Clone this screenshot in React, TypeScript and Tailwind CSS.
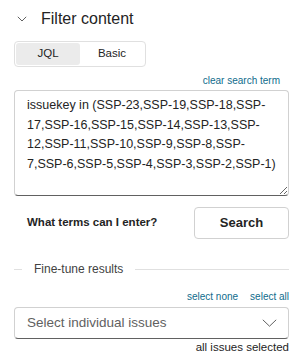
import React from "react";

export default function App() {
  return (
    <div className="w-[303px] h-[359px] bg-white px-[14px] text-[#242424] font-['Liberation_Sans',Arial,sans-serif] overflow-hidden">
      <div className="flex items-center h-[36px] pt-[2px]">
        <svg width="10" height="6" viewBox="0 0 10 6" className="ml-[3px] mr-[14px]">
          <path d="M0.8 0.8 L5 5 L9.2 0.8" fill="none" stroke="#616161" strokeWidth="1" />
        </svg>
        <span className="text-[16px] text-[#242424]">Filter content</span>
      </div>
      <div className="mt-[5px] flex w-[132px] h-[26px] border border-[#e0e0e0] rounded-[4px] p-px text-[11.5px]">
        <button className="w-[64px] rounded-[3px] bg-[#ebebeb] text-[#242424]">JQL</button>
        <button className="flex-1 rounded-[3px] text-[#242424]">Basic</button>
      </div>
      <div className="flex justify-end mt-[5px] h-[16px] items-center pr-[9px]">
        <span className="text-[10px] text-[#0f6c8c]">clear search term</span>
      </div>
      <textarea
        className="mt-[2px] block w-[275px] h-[106px] border border-[#d1d1d1] border-b-[#616161] rounded-[4px] pl-[12px] pr-[8px] pt-[5px] text-[12.5px] leading-[19.7px] text-[#242424] resize-y outline-none"
        defaultValue="issuekey in (SSP-23,SSP-19,SSP-18,SSP-17,SSP-16,SSP-15,SSP-14,SSP-13,SSP-12,SSP-11,SSP-10,SSP-9,SSP-8,SSP-7,SSP-6,SSP-5,SSP-4,SSP-3,SSP-2,SSP-1)"
      />
      <div className="flex items-center justify-between mt-[11px]">
        <span className="ml-[13px] text-[11.5px] font-bold text-[#242424]">What terms can I enter?</span>
        <button className="w-[95px] h-[32px] border border-[#d1d1d1] rounded-[4px] text-[13px] font-bold text-[#242424]">Search</button>
      </div>
      <div className="flex items-center mt-[21px] h-[18px]">
        <div className="w-[8px] h-px bg-[#e0e0e0]" />
        <span className="px-[12px] text-[12px] text-[#424242]">Fine-tune results</span>
        <div className="flex-1 h-px bg-[#e0e0e0]" />
      </div>
      <div className="flex justify-end gap-[12px] mt-[11px] h-[14px] items-center">
        <span className="text-[10px] text-[#0f6c8c]">select none</span>
        <span className="text-[10px] text-[#0f6c8c]">select all</span>
      </div>
      <div className="mt-[4px] flex items-center justify-between w-[275px] h-[32px] border border-[#d1d1d1] border-b-[#616161] rounded-[4px] pl-[12px] pr-[11px]">
        <span className="text-[13.5px] text-[#616161]">Select individual issues</span>
        <svg width="15" height="8" viewBox="0 0 15 8">
          <path d="M0.8 0.8 L7.5 7.2 L14.2 0.8" fill="none" stroke="#616161" strokeWidth="1" />
        </svg>
      </div>
      <div className="flex justify-end mt-[1px] h-[16px] items-center">
        <span className="text-[11.5px] text-[#242424]">all issues selected</span>
      </div>
    </div>
  );
}
